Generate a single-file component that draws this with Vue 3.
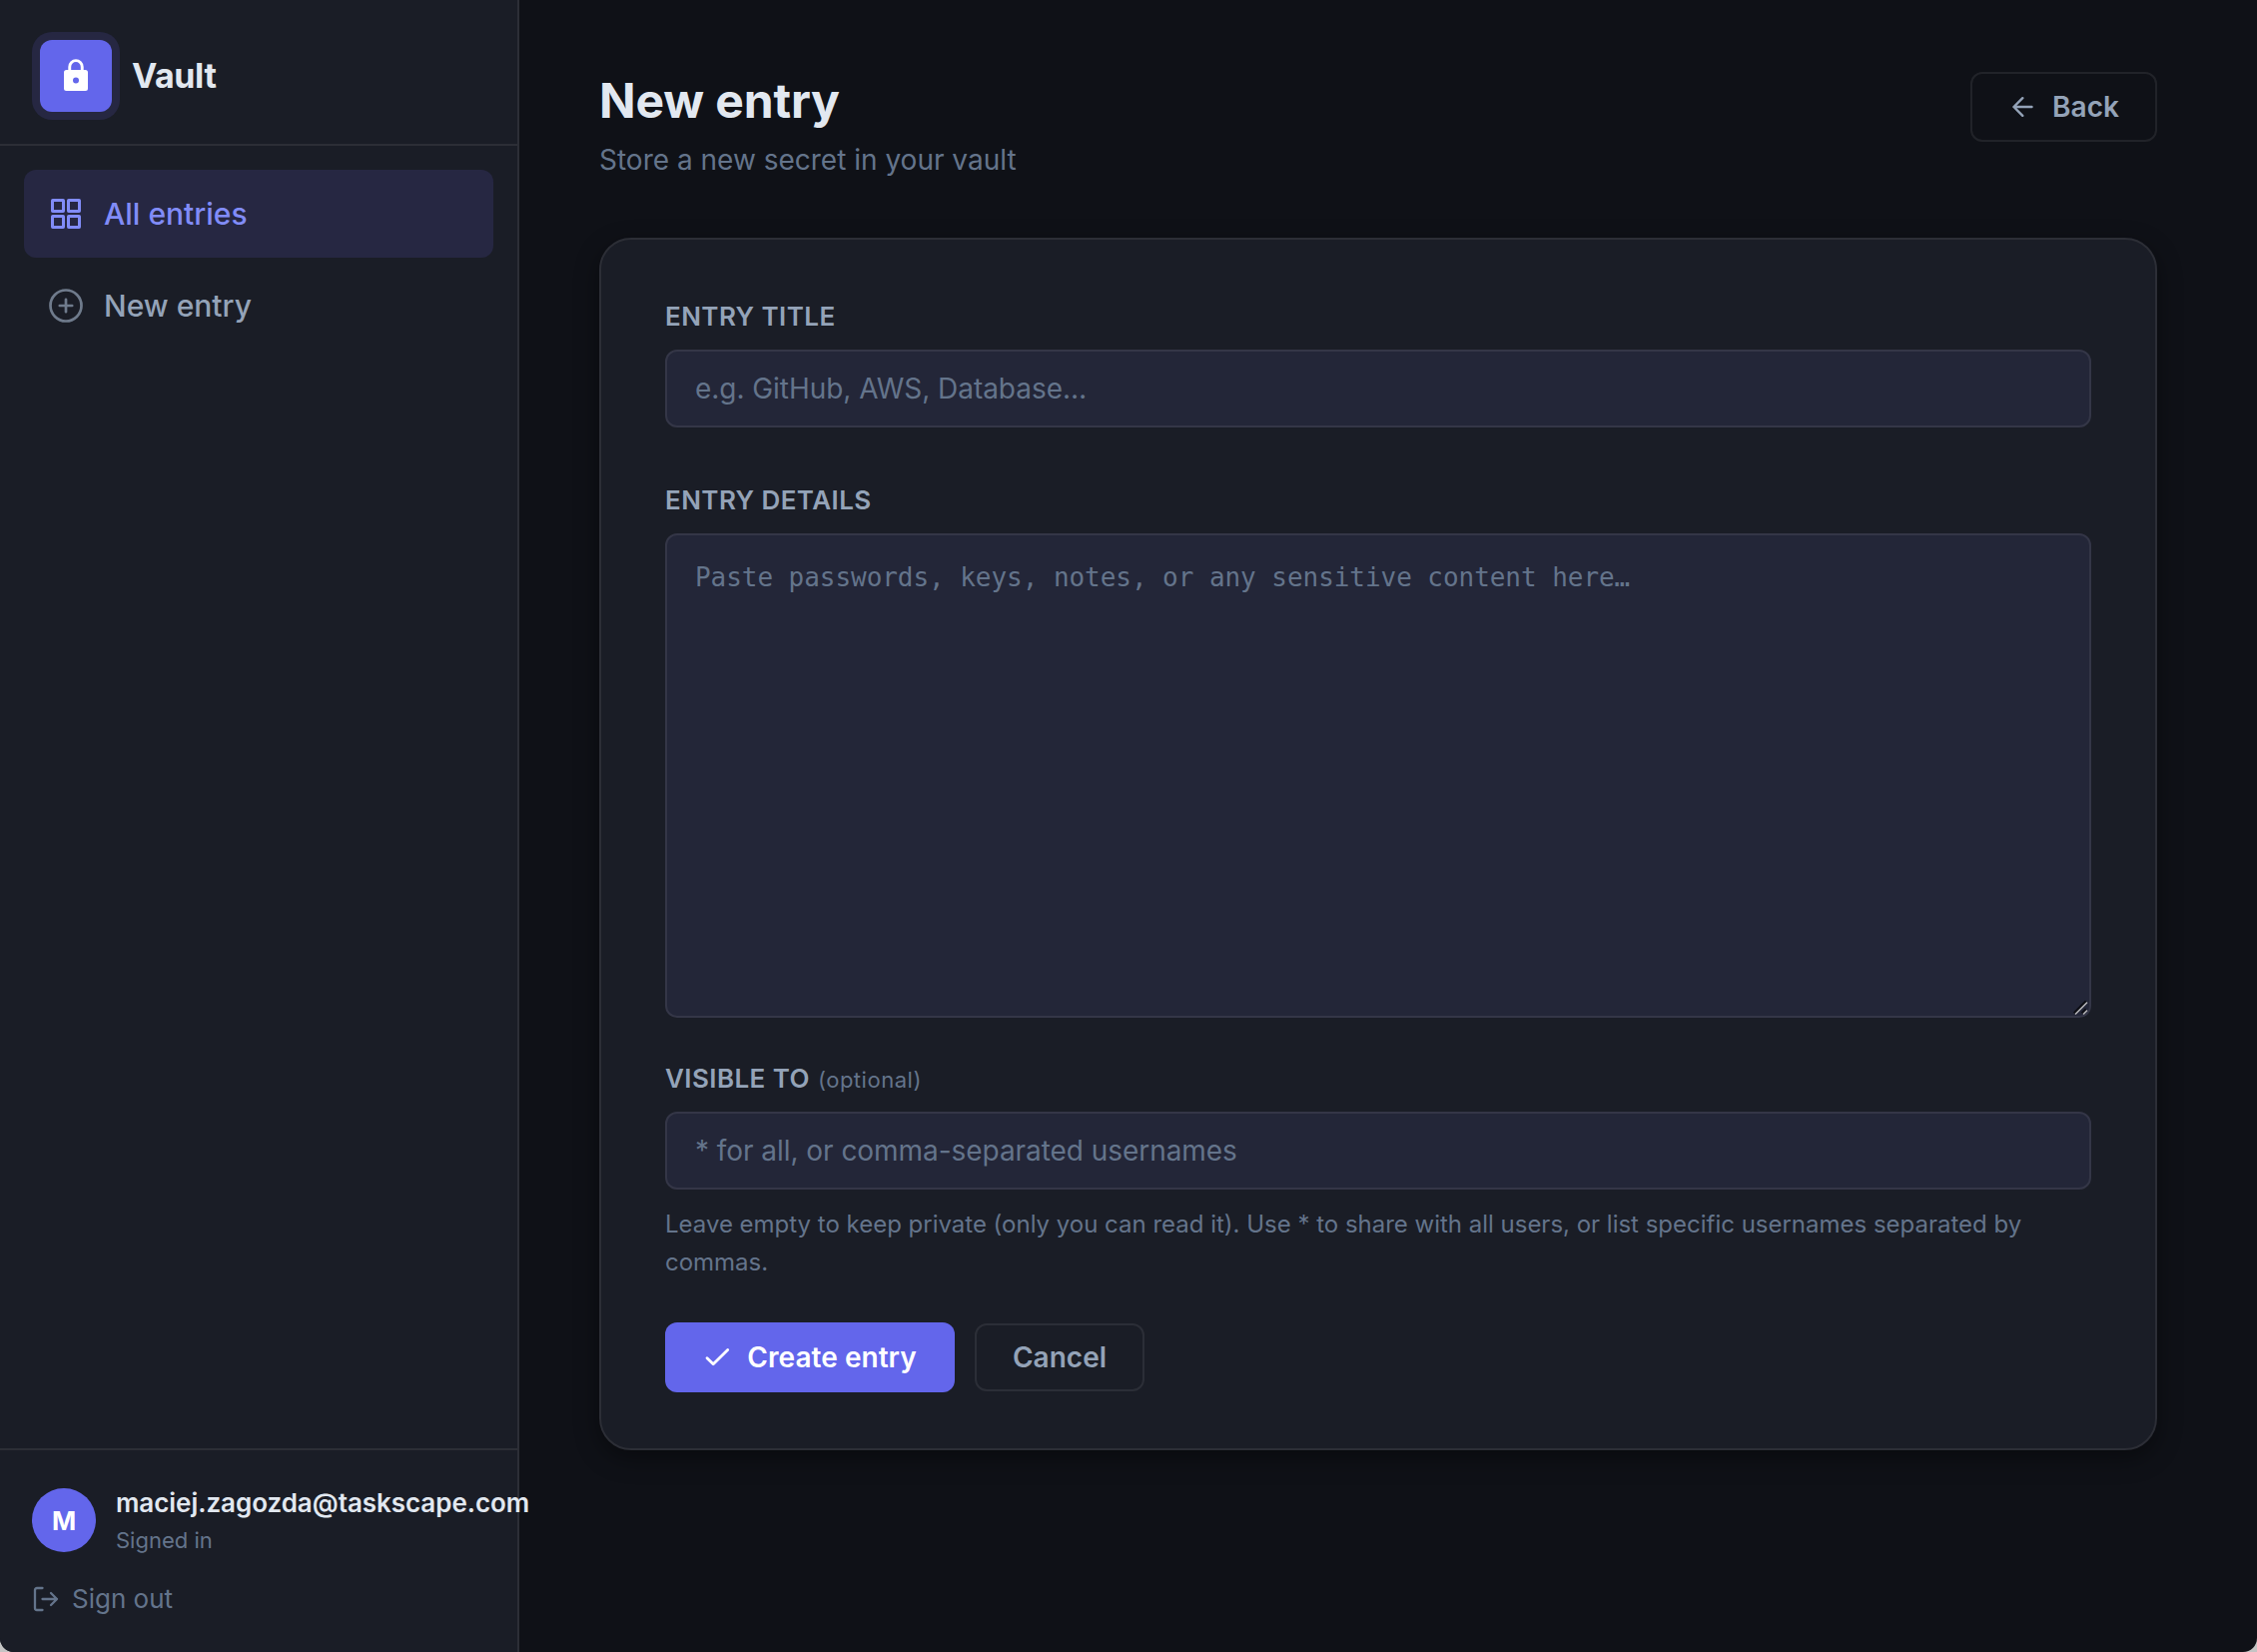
<template>
  <div class="app">
    <aside class="sidebar">
      <div class="brand">
        <div class="brand-icon">
          <svg width="36" height="36" viewBox="0 0 36 36">
            <path
              fill="#fff"
              fill-rule="evenodd"
              d="M10.3 12V8.9a7.7 7.7 0 0 1 15.4 0V12h1.8a2.5 2.5 0 0 1 2.5 2.5V30.5a2.5 2.5 0 0 1-2.5 2.5H8.5a2.5 2.5 0 0 1-2.5-2.5V14.5a2.5 2.5 0 0 1 2.5-2.5zM13.2 12h9.6V8.9a4.8 4.8 0 0 0-9.6 0zM18 19.5a3 3 0 1 0 0 6 3 3 0 0 0 0-6z"
            />
          </svg>
        </div>
        <span class="brand-name">Vault</span>
      </div>

      <nav class="nav">
        <a class="nav-item active">
          <svg width="36" height="36" viewBox="0 0 36 36" fill="none" stroke="currentColor" stroke-width="3">
            <rect x="4.5" y="4.5" width="11" height="11" rx="0.3" />
            <rect x="20.5" y="4.5" width="11" height="11" rx="0.3" />
            <rect x="4.5" y="20.5" width="11" height="11" rx="0.3" />
            <rect x="20.5" y="20.5" width="11" height="11" rx="0.3" />
          </svg>
          <span>All entries</span>
        </a>
        <a class="nav-item">
          <svg width="36" height="36" viewBox="0 0 36 36" fill="none" stroke="currentColor" stroke-width="2.7" stroke-linecap="round">
            <circle cx="18" cy="18" r="15.5" />
            <path d="M18 11.8v12.4M11.8 18h12.4" />
          </svg>
          <span>New entry</span>
        </a>
      </nav>

      <div class="sidebar-footer">
        <div class="user">
          <div class="avatar">M</div>
          <div class="user-info">
            <div class="user-name">maciej.zagozda@taskscape.com</div>
            <div class="user-status">Signed in</div>
          </div>
        </div>
        <a class="sign-out">
          <svg width="28" height="28" viewBox="0 0 28 28" fill="none" stroke="currentColor" stroke-width="2.3" stroke-linecap="round" stroke-linejoin="round">
            <path d="M10.5 3H5a2 2 0 0 0-2 2v18a2 2 0 0 0 2 2h5.5" />
            <path d="M10.5 14H25M19 8l6 6-6 6" />
          </svg>
          <span>Sign out</span>
        </a>
      </div>
    </aside>

    <main class="main">
      <header class="page-header">
        <div>
          <h1>New entry</h1>
          <p class="subtitle">Store a new secret in your vault</p>
        </div>
        <button class="btn btn-ghost btn-back">
          <svg width="28" height="28" viewBox="0 0 28 28" fill="none" stroke="currentColor" stroke-width="2.4" stroke-linecap="round" stroke-linejoin="round">
            <path d="M23.5 14h-18M14.3 5.2L5.5 14l8.8 8.8" />
          </svg>
          <span>Back</span>
        </button>
      </header>

      <form class="card" @submit.prevent>
        <div class="field field-title">
          <label>ENTRY TITLE</label>
          <input v-model="title" type="text" placeholder="e.g. GitHub, AWS, Database…" />
        </div>

        <div class="field field-details">
          <label>ENTRY DETAILS</label>
          <div class="textarea-wrap">
            <textarea v-model="details" placeholder="Paste passwords, keys, notes, or any sensitive content here…"></textarea>
            <svg class="resize-grip" width="16" height="16" viewBox="0 0 16 16" fill="none">
              <path d="M1 13.5L13 1.5M9 13.5l4-4" stroke="#0c0d14" stroke-width="3" />
              <path d="M2 14.5L14 2.5M10 14.5l4-4" stroke="#b4b4b8" stroke-width="1.6" />
            </svg>
          </div>
        </div>

        <div class="field">
          <label>VISIBLE TO <span class="optional">(optional)</span></label>
          <input v-model="visibleTo" type="text" placeholder="* for all, or comma-separated usernames" />
          <p class="hint">
            Leave empty to keep private (only you can read it). Use * to share with all users, or list specific usernames separated by commas.
          </p>
        </div>

        <div class="actions">
          <button class="btn btn-primary">
            <svg width="28" height="28" viewBox="0 0 28 28" fill="none" stroke="currentColor" stroke-width="2.8" stroke-linecap="round" stroke-linejoin="round">
              <path d="M4 14.8l6.2 6L24.7 6.5" />
            </svg>
            <span>Create entry</span>
          </button>
          <button class="btn btn-ghost btn-cancel">Cancel</button>
        </div>
      </form>
    </main>
  </div>
</template>

<script setup>
import { ref } from 'vue'

const title = ref('')
const details = ref('')
const visibleTo = ref('')
</script>

<style>
body {
  background: #c4c4c4;
}
</style>

<style scoped>
.app {
  display: flex;
  height: 1654px;
  overflow: hidden;
  background: #0f1117;
  border-radius: 0 0 14px 14px;
  font-family: Inter, "Liberation Sans", sans-serif;
  color: #e2e8f0;
}

.sidebar {
  box-sizing: border-box;
  width: 520px;
  flex-shrink: 0;
  display: flex;
  flex-direction: column;
  background: #1a1d26;
  border-right: 2px solid #2c2e36;
}

.brand {
  display: flex;
  align-items: center;
  gap: 20px;
  padding: 40px 40px 32px;
  border-bottom: 2px solid #2c2e36;
}

.brand-icon {
  width: 72px;
  height: 72px;
  display: flex;
  align-items: center;
  justify-content: center;
  background: #6366eb;
  border-radius: 12px;
  box-shadow: 0 0 0 8px #262742;
}

.brand-name {
  padding-bottom: 2px;
  font-size: 34px;
  font-weight: 700;
  letter-spacing: -0.4px;
}

.nav {
  flex: 1;
  display: flex;
  flex-direction: column;
  gap: 4px;
  padding: 24px;
}

.nav-item {
  display: flex;
  align-items: center;
  gap: 20px;
  height: 88px;
  padding: 0 24px;
  border-radius: 12px;
  font-size: 30px;
  font-weight: 500;
  color: #94a3b8;
}

.nav-item svg {
  opacity: 0.7;
}

.nav-item.active {
  background: #262742;
  color: #818cf8;
}

.nav-item.active svg {
  opacity: 1;
}

.sidebar-footer {
  padding: 32px;
  border-top: 2px solid #2c2e36;
}

.user {
  display: flex;
  align-items: center;
  gap: 20px;
}

.avatar {
  width: 64px;
  height: 64px;
  flex-shrink: 0;
  display: flex;
  align-items: center;
  justify-content: center;
  border-radius: 50%;
  background: #6366eb;
  color: #fff;
  font-size: 26px;
  font-weight: 700;
}

.user-info {
  position: relative;
  z-index: 1;
  padding-top: 2px;
  white-space: nowrap;
}

.user-name {
  font-size: 26px;
  line-height: 38px;
  font-weight: 600;
  letter-spacing: -0.05px;
}

.user-status {
  font-size: 22px;
  line-height: 36px;
  color: #64748b;
}

.sign-out {
  display: flex;
  align-items: center;
  gap: 12px;
  margin-top: 20px;
  font-size: 26px;
  line-height: 42px;
  color: #64748b;
}

.main {
  flex: 1;
  padding: 72px 100px 0 80px;
}

.page-header {
  display: flex;
  align-items: flex-start;
  justify-content: space-between;
  margin-bottom: 56px;
}

h1 {
  margin: 0;
  font-size: 48px;
  line-height: 58px;
  font-weight: 700;
  letter-spacing: -0.12px;
}

.subtitle {
  margin: 8px 0 0;
  font-size: 28px;
  line-height: 44px;
  color: #64748b;
}

.btn {
  box-sizing: border-box;
  display: flex;
  align-items: center;
  justify-content: center;
  gap: 16px;
  height: 70px;
  padding: 0 36px;
  border: none;
  border-radius: 12px;
  font-family: inherit;
  font-size: 28px;
  font-weight: 600;
}

.btn-ghost {
  background: transparent;
  border: 2px solid rgba(255, 255, 255, 0.08);
  color: #94a3b8;
}

.btn-back {
  width: 187px;
}

.btn-cancel {
  width: 170px;
  height: 68px;
}

.btn-primary {
  width: 290px;
  background: #6366eb;
  color: #fff;
  letter-spacing: 0.05px;
}

.card {
  padding: 56px 64px;
  background: #1a1d26;
  border: 2px solid #2c2e36;
  border-radius: 32px;
  box-shadow: 0 8px 24px rgba(0, 0, 0, 0.4);
}

.field {
  display: flex;
  flex-direction: column;
}

.field-title {
  margin-bottom: 52px;
}

.field-details {
  margin-bottom: 40px;
}

label {
  height: 42px;
  margin-bottom: 12px;
  font-size: 26px;
  line-height: 42px;
  font-weight: 600;
  letter-spacing: 0.42px;
  color: #94a3b8;
}

.optional {
  margin-left: 1px;
  font-size: 22px;
  font-weight: 400;
  letter-spacing: 0.52px;
  color: #64748b;
}

input,
textarea {
  box-sizing: border-box;
  width: 100%;
  margin: 0;
  background: #232638;
  border: 2px solid #343647;
  border-radius: 12px;
  outline: none;
  color: #e2e8f0;
}

input {
  height: 78px;
  padding: 0 28px;
  font-family: inherit;
  font-size: 28px;
  letter-spacing: -0.05px;
}

textarea {
  display: block;
  height: 485px;
  padding: 20px 28px;
  resize: none;
  font-family: "DejaVu Sans Mono", monospace;
  font-size: 26px;
  line-height: 44px;
  letter-spacing: -0.05px;
}

input::placeholder,
textarea::placeholder {
  color: #64748b;
  opacity: 1;
}

.textarea-wrap {
  position: relative;
}

.resize-grip {
  position: absolute;
  right: 2px;
  bottom: 2px;
}

.hint {
  margin: 16px 0 0;
  font-size: 24px;
  line-height: 38px;
  letter-spacing: -0.01px;
  color: #64748b;
}

.actions {
  display: flex;
  align-items: center;
  gap: 20px;
  margin-top: 41px;
}
</style>
